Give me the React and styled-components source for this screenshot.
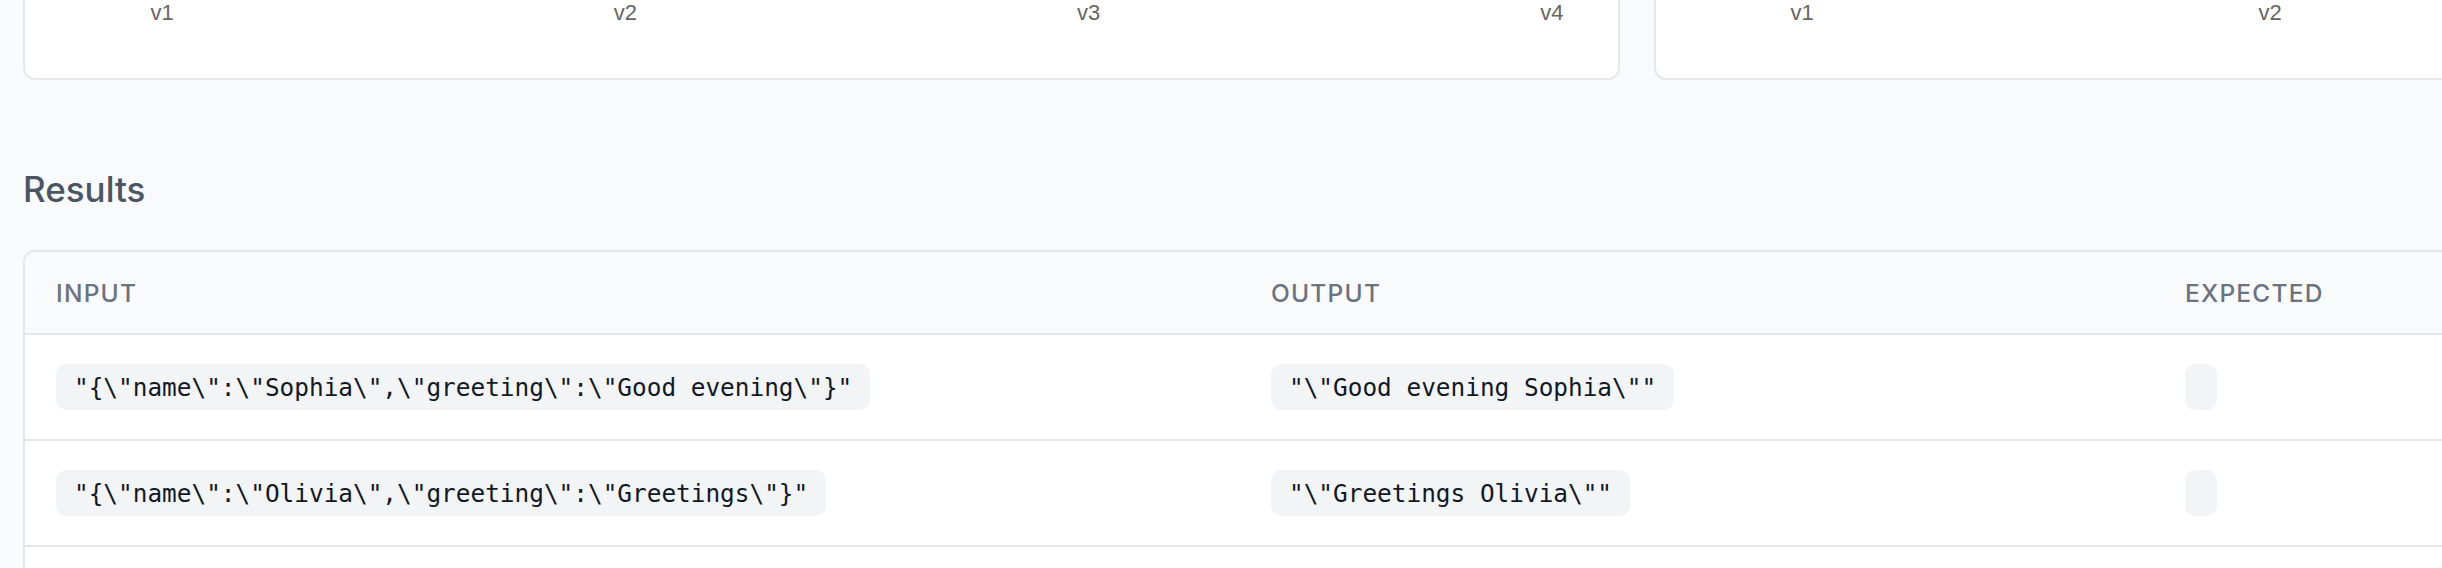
import React from 'react';
import styled, { createGlobalStyle } from 'styled-components';

// --- Global ---
const GlobalStyle = createGlobalStyle`
  html, body {
    margin: 0;
    padding: 0;
    background-color: #f9fafb;
    overflow: hidden;
  }
  * {
    box-sizing: border-box;
  }
`;

// --- Layout ---
const Page = styled.div`
  width: 3274px;
  padding: 0 23px 60px;
  margin-top: -302px; /* page is scrolled: chart tops are above the fold */
  font-family: Inter, 'Noto Sans', sans-serif;
`;

const ChartRow = styled.div`
  display: grid;
  grid-template-columns: 1597px 1597px;
  gap: 34px;
`;

const ChartCard = styled.div`
  background-color: #ffffff;
  border: 2px solid #e5e7eb;
  border-radius: 12px;
  padding: 0 ${(p) => p.$padRight}px 52px ${(p) => p.$padLeft}px;
`;

const PlotArea = styled.div`
  height: 300px;
`;

const TickRow = styled.div`
  display: flex;
  justify-content: space-between;
  width: ${(p) => p.$span}px;
`;

const Tick = styled.span`
  width: 60px;
  text-align: center;
  font-family: 'Liberation Sans', Arial, sans-serif;
  font-size: 22px;
  line-height: 26px;
  color: #666666;
`;

const SectionTitle = styled.h2`
  margin: 89px 0 41px;
  font-size: 35px;
  line-height: 40px;
  font-weight: 500;
  color: #4b5563;
`;

// --- Table ---
const Table = styled.div`
  background-color: #ffffff;
  border: 2px solid #e5e7eb;
  border-radius: 12px;
  overflow: hidden;
`;

const Row = styled.div`
  display: grid;
  grid-template-columns: 1215px 914px 1fr;
  border-bottom: 2px solid #e5e7eb;
  background-color: ${(p) => (p.$head ? '#f9fafb' : '#ffffff')};
`;

const HeadCell = styled.div`
  height: 81px;
  display: flex;
  align-items: center;
  padding: 0 31px;
  font-size: 24.5px;
  font-weight: 500;
  letter-spacing: 0.05em;
  text-transform: uppercase;
  color: #6b7280;
`;

const Cell = styled.div`
  padding: 29px 31px;
  display: flex;
  align-items: center;
`;

const Code = styled.code`
  display: inline-block;
  min-width: ${(p) => (p.$empty ? '32px' : '0')};
  height: 46px;
  padding: 5.5px ${(p) => (p.$empty ? '0' : '18px')};
  border-radius: 10px;
  background-color: #f3f4f6;
  font-family: 'DejaVu Sans Mono', 'Liberation Mono', monospace;
  font-size: 24.4px;
  line-height: 35px;
  color: #111827;
  white-space: pre;
`;

const charts = [
  { ticks: ['v1', 'v2', 'v3', 'v4'], padLeft: 107, padRight: 36 },
  { ticks: ['v1', 'v2', 'v3', 'v4'], padLeft: 116, padRight: 13 },
];

const results = [
  {
    input: '"{\\"name\\":\\"Sophia\\",\\"greeting\\":\\"Good evening\\"}"',
    output: '"\\"Good evening Sophia\\""',
    expected: '',
  },
  {
    input: '"{\\"name\\":\\"Olivia\\",\\"greeting\\":\\"Greetings\\"}"',
    output: '"\\"Greetings Olivia\\""',
    expected: '',
  },
  {
    input: '"{\\"name\\":\\"Emma\\",\\"greeting\\":\\"Hello\\"}"',
    output: '"\\"Hello Emma\\""',
    expected: '',
  },
];

const App = () => {
  return (
    <>
      <GlobalStyle />
      <Page>
        <ChartRow>
          {charts.map((c, i) => (
            <ChartCard key={i} $padLeft={c.padLeft} $padRight={c.padRight}>
              <PlotArea />
              <TickRow $span={1597 - 4 - c.padLeft - c.padRight}>
                {c.ticks.map((t) => (
                  <Tick key={t}>{t}</Tick>
                ))}
              </TickRow>
            </ChartCard>
          ))}
        </ChartRow>

        <SectionTitle>Results</SectionTitle>

        <Table>
          <Row $head>
            <HeadCell>Input</HeadCell>
            <HeadCell>Output</HeadCell>
            <HeadCell>Expected</HeadCell>
          </Row>
          {results.map((r, i) => (
            <Row key={i}>
              <Cell>
                <Code>{r.input}</Code>
              </Cell>
              <Cell>
                <Code>{r.output}</Code>
              </Cell>
              <Cell>
                <Code $empty={!r.expected}>{r.expected}</Code>
              </Cell>
            </Row>
          ))}
        </Table>
      </Page>
    </>
  );
};

export default App;
